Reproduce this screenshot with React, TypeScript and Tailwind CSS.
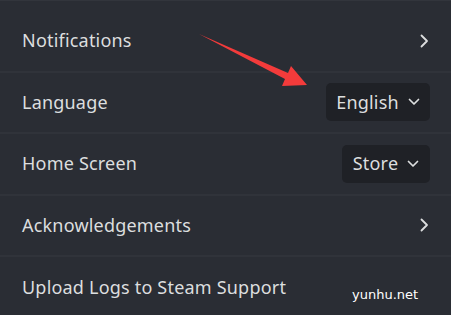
import React from 'react';

function ChevronRight() {
  return (
    <svg width="10" height="14" viewBox="0 0 10 14" fill="none" className="text-[#dcdedf]">
      <path d="M2.5 1.5L8 7L2.5 12.5" stroke="currentColor" strokeWidth="1.8" strokeLinecap="round" strokeLinejoin="round" />
    </svg>
  );
}

function ChevronDown() {
  return (
    <svg width="12" height="8" viewBox="0 0 12 8" fill="none" className="text-[#dcdedf]">
      <path d="M1.5 1.5L6 6L10.5 1.5" stroke="currentColor" strokeWidth="1.7" strokeLinecap="round" strokeLinejoin="round" />
    </svg>
  );
}

function Dropdown({ value, width }: { value: string; width: string }) {
  return (
    <button className={`flex h-[38px] items-center justify-center gap-[9px] rounded-[5px] bg-[#1f2126] text-[18px] tracking-[0.2px] text-[#dcdedf] ${width}`}>
      <span>{value}</span>
      <ChevronDown />
    </button>
  );
}

function Row({ label, right, last }: { label: string; right: React.ReactNode; last?: boolean }) {
  return (
    <div className={`flex h-[61.5px] items-center justify-between pl-[22px] pr-[21px] ${last ? '' : 'border-b-2 border-[#30333a]'}`}>
      <span className="text-[18px] tracking-[0.2px] text-[#dcdedf]">{label}</span>
      {right}
    </div>
  );
}

export default function App() {
  return (
    <div className="relative h-[315px] w-[451px] overflow-hidden border-t border-[#32353c] bg-[#2a2d34] pt-[10px] font-['Noto_Sans',sans-serif]">
      <Row label="Notifications" right={<div className="pr-[1px]"><ChevronRight /></div>} />
      <Row label="Language" right={<Dropdown value="English" width="w-[104px]" />} />
      <Row label="Home Screen" right={<Dropdown value="Store" width="w-[88px]" />} />
      <Row label="Acknowledgements" right={<div className="pr-[1px]"><ChevronRight /></div>} />
      <Row label="Upload Logs to Steam Support" right={null} last />

      {/* annotation arrow */}
      <svg className="absolute left-0 top-0" width="451" height="315" viewBox="0 0 451 315">
        <polygon points="199,33 288,72 291,65 307,84 282,85 285,78" fill="#f33b3b" />
      </svg>

      {/* watermark */}
      <span className="absolute left-[352px] top-[284px] font-['DejaVu_Sans',sans-serif] text-[13px] text-white">yunhu.net</span>
    </div>
  );
}
